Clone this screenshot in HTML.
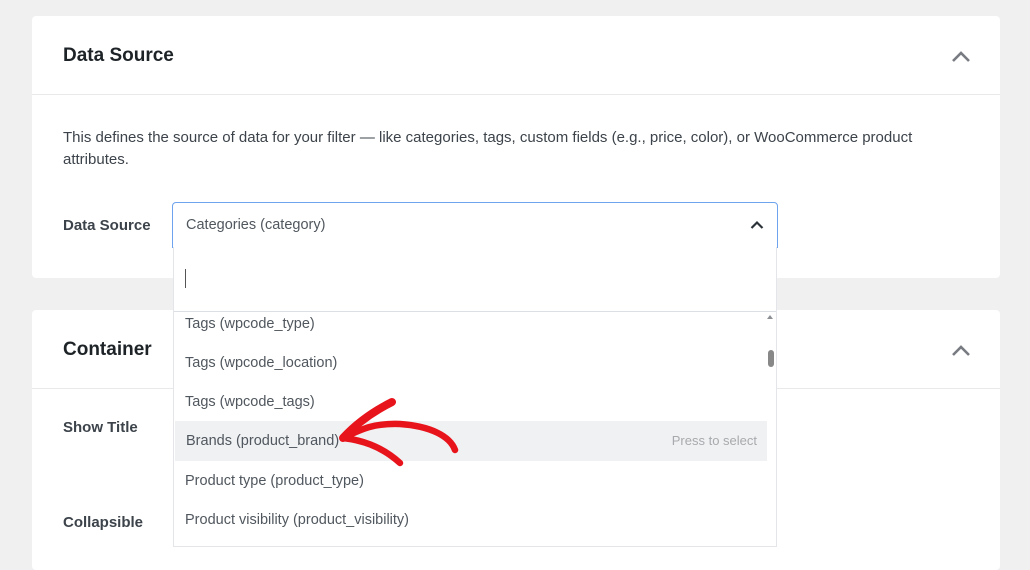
<!DOCTYPE html>
<html><head><meta charset="utf-8"><style>
*{box-sizing:border-box;margin:0;padding:0}
body{width:1030px;height:541px;overflow:hidden;background:#f0f0f1;font-family:"Liberation Sans",sans-serif;position:relative;color:#50575e}
.card{position:absolute;left:32px;width:968px;background:#fff;border-radius:4px}
.hdr{height:79px;border-bottom:1px solid #e8e9eb;position:relative}
.hdr h2{position:absolute;left:31px;top:29px;font-size:19px;font-weight:bold;color:#1d2327}
.chev{position:absolute;left:919px;top:34px}
.lbl{position:absolute;font-size:15px;font-weight:bold;color:#3c434a}
.sel{position:absolute;left:172px;top:202px;width:606px;height:46px;border:1px solid #6ea3ee;border-radius:4px 4px 0 0;background:#fff;font-size:14.5px;color:#50575e;padding:14px 13px}
.dd{position:absolute;left:173px;top:247px;width:604px;height:300px;background:#fff;border:1px solid #e3e5e8;border-top:none}
.search{height:65px;border-bottom:1px solid #dcdfe3;position:relative}
.search i{position:absolute;left:11px;top:22px;width:1px;height:19px;background:#555}
.opt{position:absolute;left:0;width:592px;height:39px;font-size:14.5px;color:#50575e;padding:0 11px;line-height:39px}
</style></head><body>
<div class="card" style="top:16px;height:262px">
 <div class="hdr"><h2>Data Source</h2>
  <svg class="chev" width="20" height="14"><path d="M2 11 L10 3 L18 11" fill="none" stroke="#787c82" stroke-width="2.6"/></svg></div>
 <div style="position:absolute;left:31px;top:111px;width:885px;font-size:15px;line-height:22px;color:#3c434a">This defines the source of data for your filter — like categories, tags, custom fields (e.g., price, color), or WooCommerce product attributes.</div>
</div>
<div class="lbl" style="left:63px;top:217px">Data Source</div>
<div class="card" style="top:310px;height:260px">
 <div class="hdr"><h2>Container</h2>
  <svg class="chev" width="20" height="14"><path d="M2 11 L10 3 L18 11" fill="none" stroke="#787c82" stroke-width="2.6"/></svg></div>
</div>
<div class="lbl" style="left:63px;top:419px">Show Title</div>
<div class="lbl" style="left:63px;top:514px">Collapsible</div>
<div class="sel">Categories (category)
 <svg style="position:absolute;right:13px;top:17px" width="14" height="10"><path d="M1.5 8 L7 2.5 L12.5 8" fill="none" stroke="#2c3338" stroke-width="2.2"/></svg></div>
<div class="dd">
 <div class="search"><i></i></div>
 <div class="opt" style="top:58px">Tags (wpcode_type)</div>
 <div class="opt" style="top:97px">Tags (wpcode_location)</div>
 <div class="opt" style="top:136px">Tags (wpcode_tags)</div>
 <div class="opt" style="top:174px;left:1px;height:40px;line-height:40px;background:#f0f1f3">Brands (product_brand)<span style="position:absolute;right:10px;font-size:13px;color:#a7aaad">Press to select</span></div>
 <div class="opt" style="top:215px">Product type (product_type)</div>
 <div class="opt" style="top:254px">Product visibility (product_visibility)</div>
 <svg style="position:absolute;left:592px;top:66px" width="8" height="8"><path d="M1 6 L4 2 L7 6Z" fill="#8c8f94"/></svg>
 <div style="position:absolute;left:594px;top:103px;width:6px;height:17px;border-radius:3px;background:#888"></div>
</div>
<svg style="position:absolute;left:0;top:0" width="1030" height="541"><g fill="none" stroke="#e8141b" stroke-linecap="round" stroke-linejoin="round">
<path d="M392 402 C372 412 355 425 343 438" stroke-width="8"/>
<path d="M343 438 C360 430 372 423 400 424 C430 426 450 436 455 450" stroke-width="6.5"/>
<path d="M343 438 C360 440 380 445 400 463" stroke-width="6.5"/>
</g></svg>
</body></html>
